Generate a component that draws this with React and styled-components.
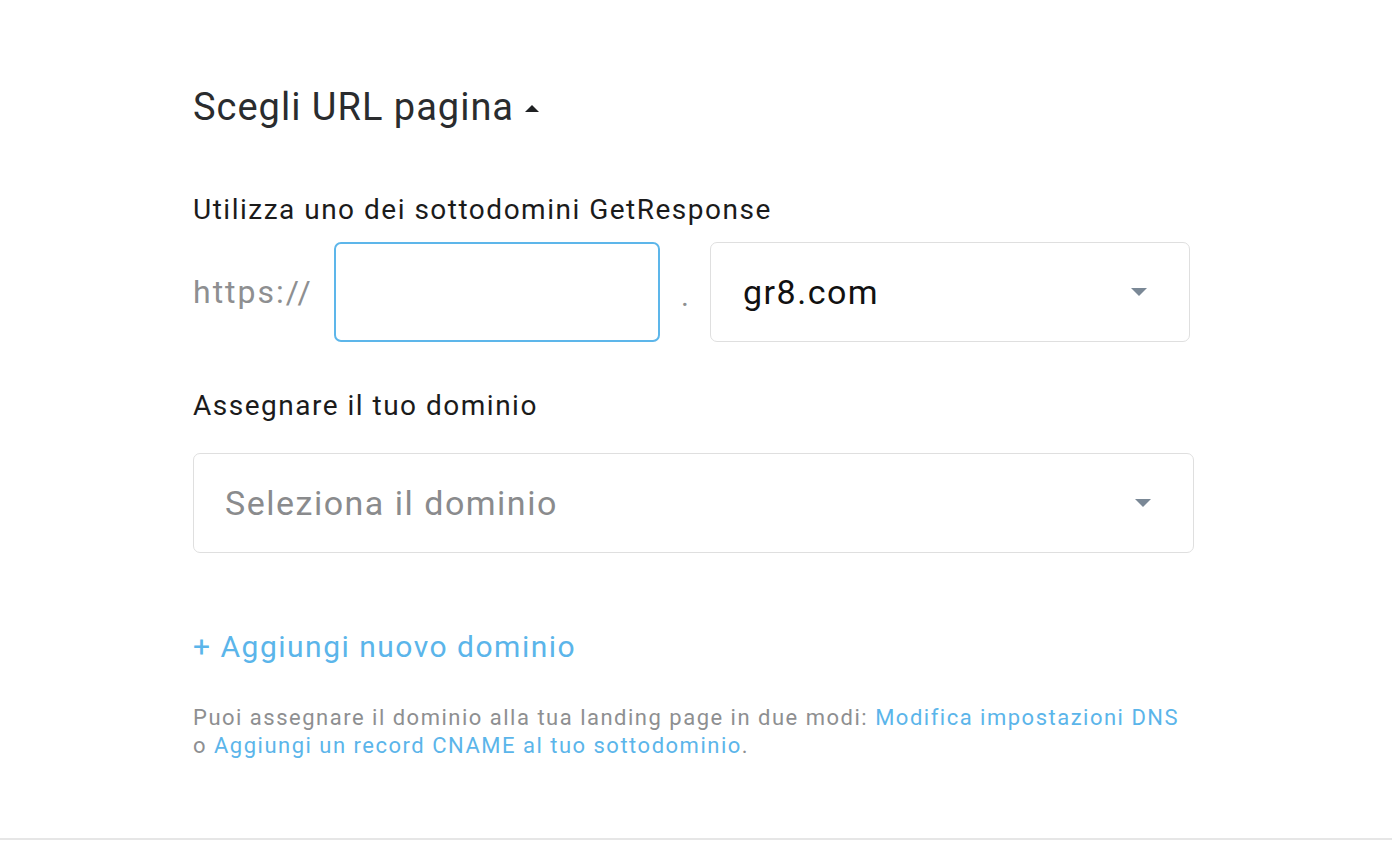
import styled, { createGlobalStyle } from 'styled-components'

const GlobalStyle = createGlobalStyle`
  html, body {
    margin: 0;
    padding: 0;
    background: #ffffff;
  }
  body {
    font-family: Roboto, "Liberation Sans", sans-serif;
    -webkit-font-smoothing: antialiased;
  }
`

const Page = styled.div`
  height: 840px;
  border-bottom: 2px solid #e6e6e6;
  padding: 84px 0 0 193px;
  box-sizing: border-box;
`

const Section = styled.section`
  width: 1001px;
`

const Heading = styled.h2`
  margin: 0;
  display: flex;
  align-items: center;
  gap: 11px;
  font-size: 38px;
  font-weight: 400;
  line-height: 46px;
  letter-spacing: 1px;
  color: #2a2c2e;
`

const Caret = styled.span`
  width: 0;
  height: 0;
  border-left: 7px solid transparent;
  border-right: 7px solid transparent;
  border-bottom: 7px solid #1f2123;
  margin-top: 2px;
`

const Label = styled.div`
  margin-top: ${(p) => p.$top}px;
  font-size: 28px;
  line-height: 32px;
  letter-spacing: 1.5px;
  color: #1b1b1b;
`

const UrlRow = styled.div`
  margin-top: 16px;
  display: flex;
  align-items: center;
`

const Prefix = styled.span`
  width: 141px;
  font-size: 32px;
  letter-spacing: 2px;
  color: #8e8f91;
`

const TextInput = styled.div`
  width: 326px;
  height: 100px;
  box-sizing: border-box;
  border: 2px solid #5db6ea;
  border-radius: 7px;
`

const Dot = styled.span`
  width: 50px;
  padding-top: 6px;
  text-align: center;
  font-size: 30px;
  color: #8e8f91;
`

const Select = styled.div`
  width: ${(p) => p.$width}px;
  height: 100px;
  box-sizing: border-box;
  margin-top: ${(p) => p.$top || 0}px;
  padding: 0 42px 0 ${(p) => p.$pad}px;
  display: flex;
  align-items: center;
  justify-content: space-between;
  border: 1.5px solid #dfdfdf;
  border-radius: 7px;
  font-size: 34px;
  letter-spacing: 1.5px;
  color: ${(p) => (p.$placeholder ? '#8a8b8d' : '#111111')};
`

const Arrow = styled.span`
  width: 0;
  height: 0;
  border-left: 8px solid transparent;
  border-right: 8px solid transparent;
  border-top: 8px solid #7a8896;
`

const AddLink = styled.div`
  margin-top: 74px;
  font-size: 30px;
  line-height: 40px;
  letter-spacing: 1.5px;
  color: #5bb5ea;
`

const Help = styled.p`
  margin: 37px 0 0;
  font-size: 22px;
  line-height: 28px;
  letter-spacing: 1.5px;
  color: #8e8f91;
`

const HelpLink = styled.span`
  color: #5bb5ea;
`

export default function App() {
  return (
    <>
      <GlobalStyle />
      <Page>
        <Section>
          <Heading>
            Scegli URL pagina
            <Caret />
          </Heading>

          <Label $top={64}>Utilizza uno dei sottodomini GetResponse</Label>
          <UrlRow>
            <Prefix>https://</Prefix>
            <TextInput />
            <Dot>.</Dot>
            <Select $width={480} $pad={32}>
              gr8.com
              <Arrow />
            </Select>
          </UrlRow>

          <Label $top={48}>Assegnare il tuo dominio</Label>
          <Select $width={1001} $pad={31} $top={31} $placeholder>
            Seleziona il dominio
            <Arrow />
          </Select>

          <AddLink>+ Aggiungi nuovo dominio</AddLink>

          <Help>
            Puoi assegnare il dominio alla tua landing page in due modi:{' '}
            <HelpLink>Modifica impostazioni DNS</HelpLink>
            <br />o <HelpLink>Aggiungi un record CNAME al tuo sottodominio</HelpLink>.
          </Help>
        </Section>
      </Page>
    </>
  )
}
